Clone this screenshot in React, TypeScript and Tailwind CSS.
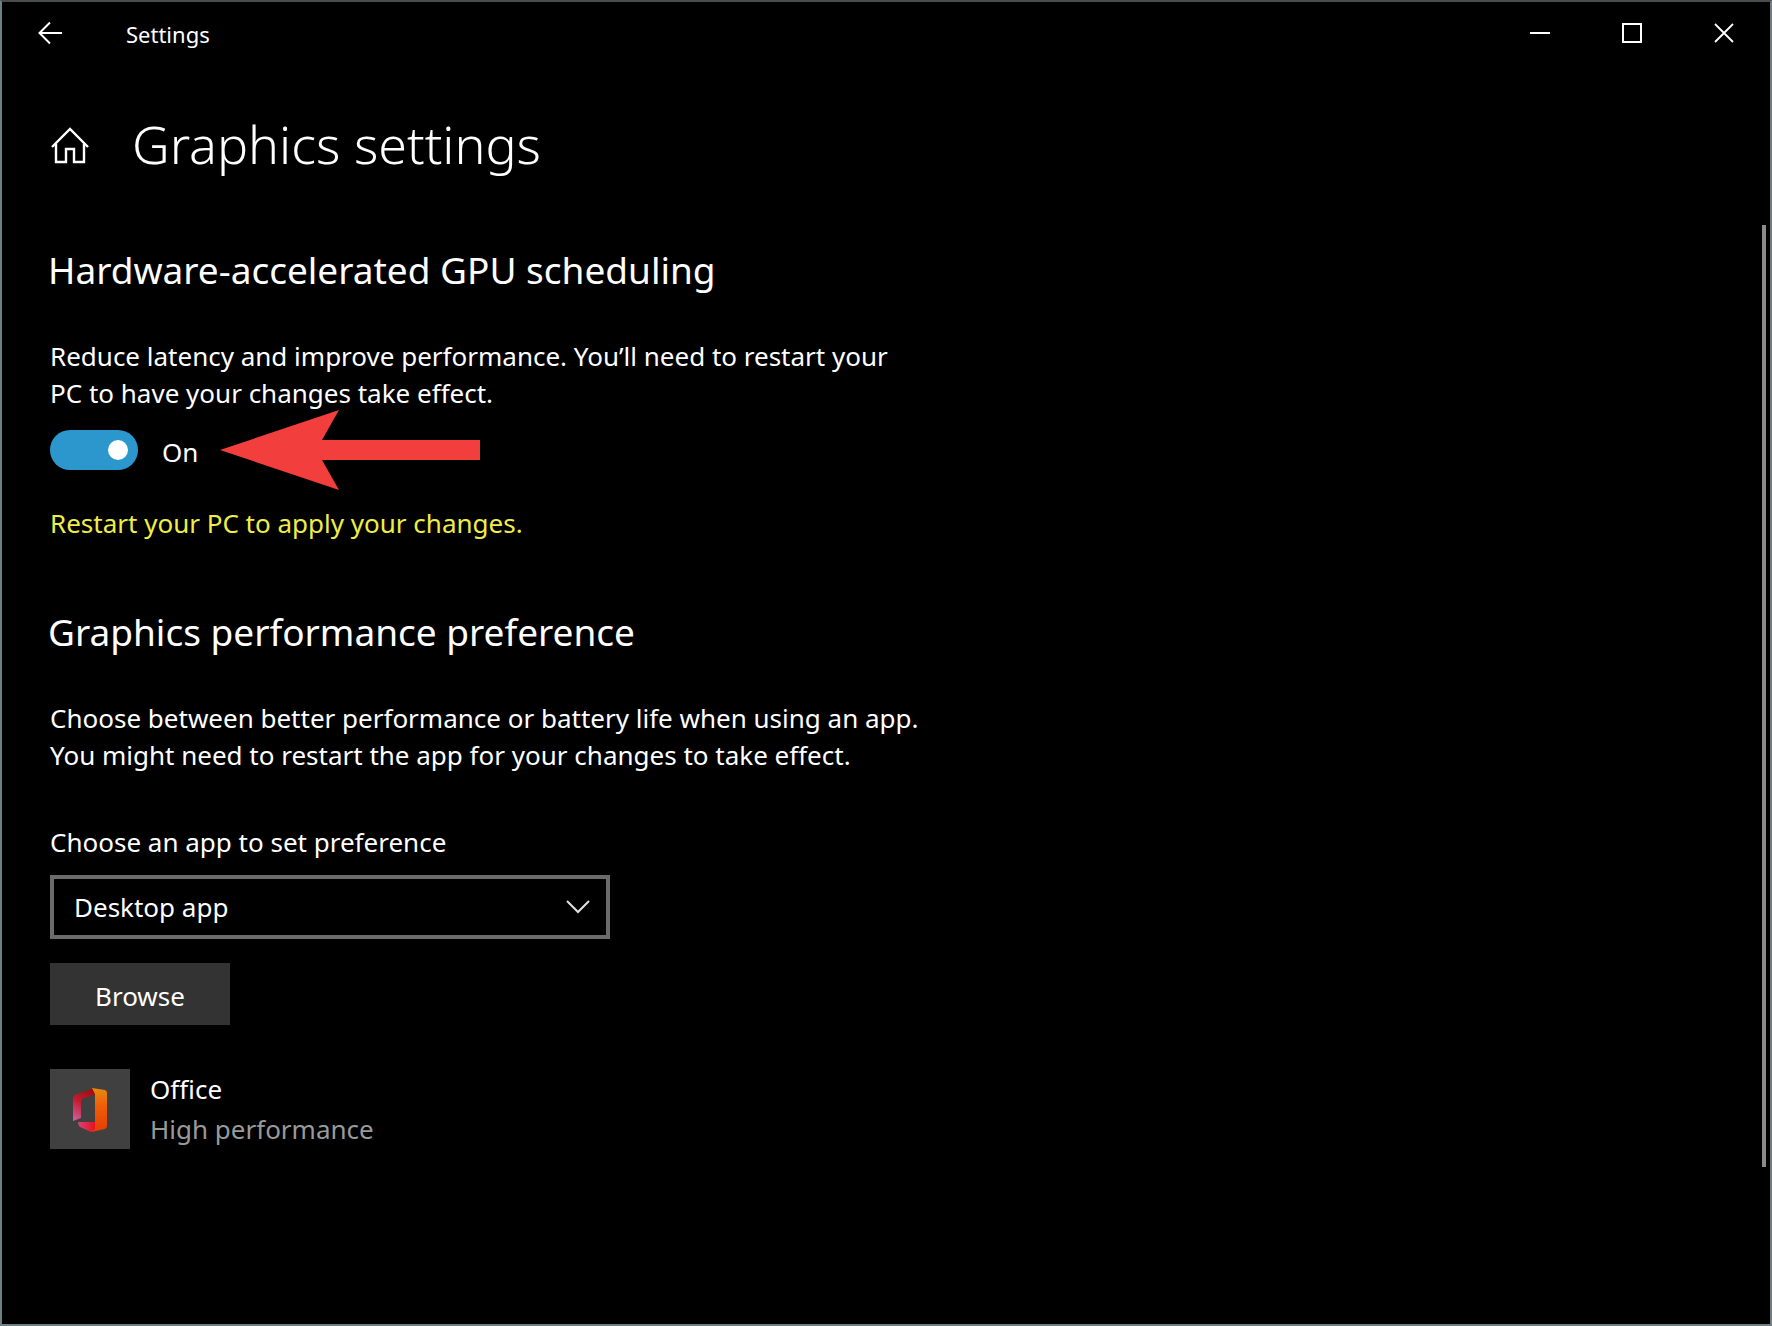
import { useState } from "react";

const APP_TYPES = ["Desktop app", "Microsoft Store app"];

function BackIcon() {
  return (
    <svg width="24" height="24" viewBox="0 0 24 24" fill="none" stroke="currentColor" strokeWidth="2">
      <path d="M24 12H2M12 1.500L1.500 12L12 22.500" />
    </svg>
  );
}

function HomeIcon() {
  return (
    <svg width="40" height="40" viewBox="0 0 40 40" fill="none" stroke="currentColor" strokeWidth="2.4">
      <path d="M2 23L20 5L38 23" />
      <path d="M6 19.500V38H16V25H24V38H34V19.500" />
    </svg>
  );
}

function OfficeLogo() {
  return (
    <svg width="40" height="48" viewBox="0 0 40 48">
      <defs>
        <linearGradient id="office-right" x1="0" y1="0" x2="0" y2="1">
          <stop offset="0" stopColor="#e88a10" />
          <stop offset="0.4" stopColor="#ee5f08" />
          <stop offset="1" stopColor="#e63c05" />
        </linearGradient>
        <linearGradient id="office-left" x1="0.6" y1="0" x2="0.2" y2="1">
          <stop offset="0" stopColor="#9d1012" />
          <stop offset="0.45" stopColor="#c21b2e" />
          <stop offset="1" stopColor="#cf5b95" />
        </linearGradient>
        <linearGradient id="office-bottom" x1="0" y1="0" x2="1" y2="0">
          <stop offset="0" stopColor="#d9447a" />
          <stop offset="1" stopColor="#e3121b" />
        </linearGradient>
      </defs>
      <path d="M24 3L5 10Q3 11 3 14V36L11 33V18Q11 14 14 13L25 10Z" fill="url(#office-left)" />
      <path d="M8 37L25 37V45L21 47L10 42Q8 40 8 37Z" fill="url(#office-bottom)" />
      <path d="M22 3L35 5Q37 6 37 8V41Q37 43 35 44L21 47L25 44V9Z" fill="url(#office-right)" />
      <path d="M11 17L25 13V37H11Z" fill="#404040" />
    </svg>
  );
}

function TitleBar() {
  return (
    <header className="flex h-[62px] items-center">
      <button type="button" aria-label="Back" className="flex h-full w-24 items-center justify-center">
        <BackIcon />
      </button>
      <span className="ml-7 pt-0.5 text-[22px] leading-8">Settings</span>
      <div className="ml-auto flex h-full">
        <button type="button" aria-label="Minimize" className="flex w-[92px] items-center justify-center">
          <span className="h-0.5 w-5 bg-white" />
        </button>
        <button type="button" aria-label="Maximize" className="flex w-[92px] items-center justify-center">
          <span className="size-5 border-2 border-white" />
        </button>
        <button type="button" aria-label="Close" className="flex w-[92px] items-center justify-center">
          <svg width="20" height="20" viewBox="0 0 20 20" stroke="currentColor" strokeWidth="1.8">
            <path d="M1 1L19 19M19 1L1 19" />
          </svg>
        </button>
      </div>
    </header>
  );
}

function GpuScheduling() {
  const [enabled, setEnabled] = useState(true);

  return (
    <section>
      <h2 className="-ml-0.5 text-[37px] leading-12">Hardware-accelerated GPU scheduling</h2>
      <p className="mt-11">
        Reduce latency and improve performance. You’ll need to restart your
        <br />
        PC to have your changes take effect.
      </p>
      <div className="relative mt-[18px] flex h-10 items-center">
        <input
          id="gpu-scheduling"
          type="checkbox"
          role="switch"
          checked={enabled}
          onChange={(e) => setEnabled(e.target.checked)}
          className="flex h-10 w-[88px] appearance-none items-center rounded-full bg-[#333] px-2.5 before:size-5 before:rounded-full before:bg-white checked:justify-end checked:bg-[#2b97cd]"
        />
        <label htmlFor="gpu-scheduling" className="pt-1 pl-6">
          {enabled ? "On" : "Off"}
        </label>
        <svg
          className="absolute -top-5 left-[170px]"
          width="260"
          height="80"
          viewBox="0 0 260 80"
          aria-hidden="true"
        >
          <path d="M0 40L119 0L102 30H260V50H102L119 80Z" fill="#f33e3e" />
        </svg>
      </div>
      <p className="mt-[35px] text-[#eeee45]">Restart your PC to apply your changes.</p>
    </section>
  );
}

function PerformancePreference() {
  return (
    <section className="mt-[66px]">
      <h2 className="-ml-0.5 text-[37px] leading-12">Graphics performance preference</h2>
      <p className="mt-11">
        Choose between better performance or battery life when using an app.
        <br />
        You might need to restart the app for your changes to take effect.
      </p>

      <label htmlFor="app-type" className="mt-[50px] block">
        Choose an app to set preference
      </label>
      <div className="relative mt-3.5 max-w-[560px]">
        <select
          id="app-type"
          className="block h-16 w-full appearance-none border-4 border-[#6b6b6b] bg-black pr-16 pl-5 text-white"
        >
          {APP_TYPES.map((type) => (
            <option key={type}>{type}</option>
          ))}
        </select>
        <svg
          className="pointer-events-none absolute top-6 right-5"
          width="24"
          height="16"
          viewBox="0 0 24 16"
          fill="none"
          stroke="#e0e0e0"
          strokeWidth="2"
        >
          <path d="M1 2L12 13L23 2" />
        </svg>
      </div>
      <button type="button" className="mt-6 h-[62px] w-[180px] bg-[#333] pt-1">
        Browse
      </button>

      <button type="button" className="mt-11 flex items-center gap-5 text-left">
        <span className="flex size-20 items-center justify-center bg-[#404040]">
          <OfficeLogo />
        </span>
        <span className="flex flex-col leading-10">
          <span>Office</span>
          <span className="text-[#999]">High performance</span>
        </span>
      </button>
    </section>
  );
}

function App() {
  return (
    <div className="relative min-h-screen border-2 border-[#6f8085] border-t-[#4a4d4d] bg-black font-['Noto_Sans',_'Open_Sans',_sans-serif] text-[26px] leading-[37px] text-white">
      <TitleBar />
      <main className="px-12 pb-20">
        <div className="mt-11 flex items-center">
          <a href="#home" aria-label="Home">
            <HomeIcon />
          </a>
          <h1 className="ml-[42px] text-[52px] leading-[72px] font-[350]">Graphics settings</h1>
        </div>
        <div className="mt-[66px]">
          <GpuScheduling />
          <PerformancePreference />
        </div>
      </main>
      {/* Scroll thumb */}
      <div className="absolute top-[223px] right-1 h-[942px] w-1 bg-[#8a8a8a]" />
    </div>
  );
}

export default App;
